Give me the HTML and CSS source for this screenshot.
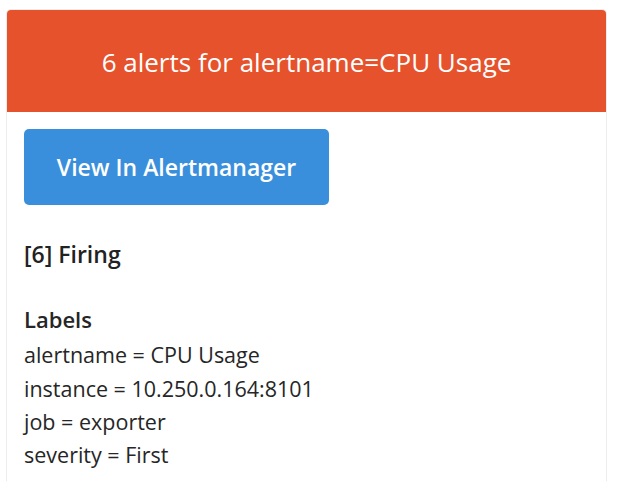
FILE: index.html
```html
<!DOCTYPE html>
<html lang="en">
<head>
<meta charset="UTF-8" />
<meta name="viewport" content="width=device-width, initial-scale=1" />
<title>Alert</title>
<link rel="stylesheet" href="styles.css">
</head>
<body>
<div class="card">
  <div class="card-header">6 alerts for alertname=CPU Usage</div>
  <div class="card-body">
    <a class="btn" href="#">View In Alertmanager</a>
    <p class="firing">[6] Firing</p>
    <div class="labels">
      <div class="labels-title">Labels</div>
      <div>alertname = CPU Usage</div>
      <div>instance = 10.250.0.164:8101</div>
      <div>job = exporter</div>
      <div>severity = First</div>
    </div>
  </div>
</div>
</body>
</html>
```

FILE: styles.css
```css
body { margin: 0; background: #fff; font-family: "Open Sans", "Noto Sans", sans-serif; color: #222; }
.card {
  margin: 9px 0 0 6px; width: 601px; border: 1px solid #ececec; border-bottom: none;
  border-radius: 5px 5px 0 0; overflow: hidden; height: 480px; box-sizing: border-box;
}
.card-header {
  background: #e5522c; color: #fff; height: 102px; display: flex; align-items: center; justify-content: center;
  font-size: 26px; padding-top: 2px; box-sizing: border-box;
}
.card-body { padding: 17px 17px 0 17px; }
.btn {
  display: flex; align-items: center; justify-content: center;
  width: 305px; height: 76px; background: #3a8fdc; color: #fff; border-radius: 5px;
  text-decoration: none; font-weight: 600; font-size: 23px;
}
.firing { margin: 33px 0 0; font-weight: 600; font-size: 23px; line-height: 32px; }
.labels { margin-top: 33px; font-size: 21.5px; line-height: 33.3px; color: #262626; }
.labels-title { font-weight: 600; font-size: 22px; margin-bottom: 2px; }
```
